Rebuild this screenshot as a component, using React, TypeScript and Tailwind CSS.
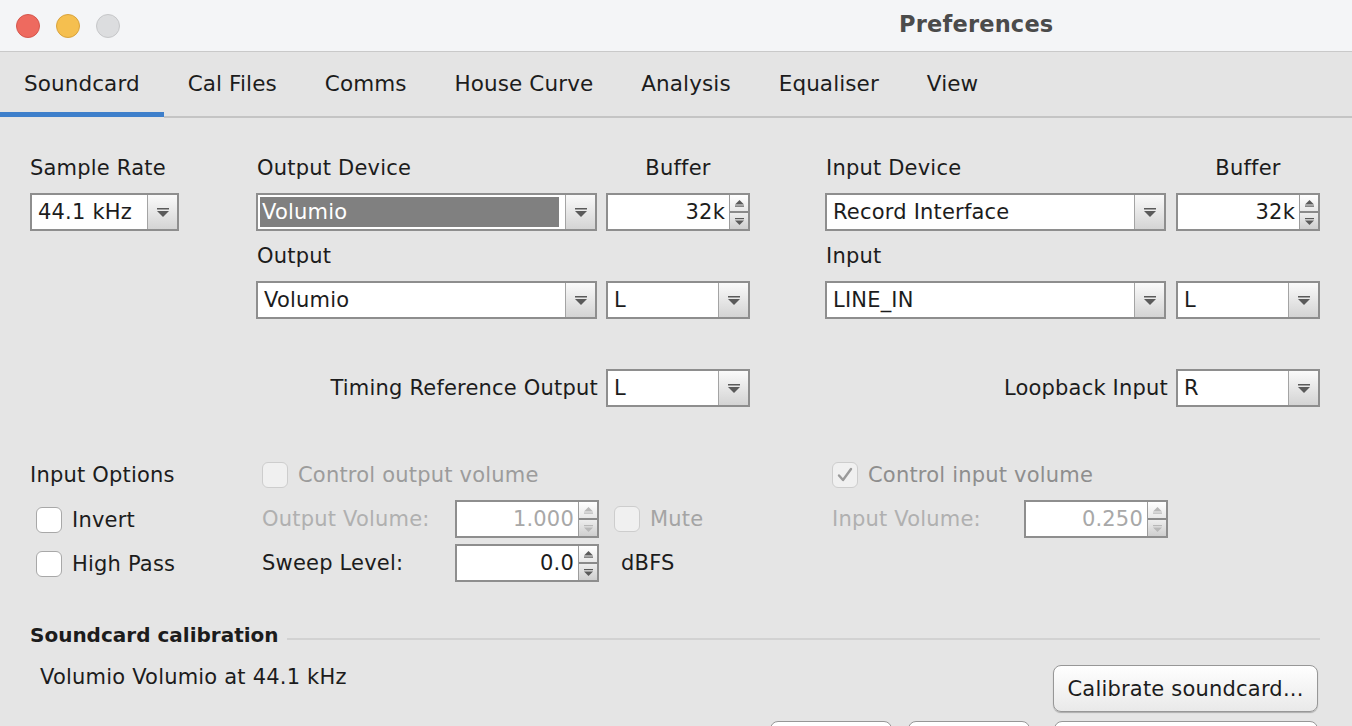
import React from 'react';

// Java Swing "Preferences" dialog, Soundcard tab

const tabs = ['Soundcard', 'Cal Files', 'Comms', 'House Curve', 'Analysis', 'Equaliser', 'View'];

function ComboArrow({ dim }: { dim?: boolean }) {
  const c = dim ? '#b0b0b0' : '#5a5a5a';
  return (
    <svg width="12" height="9" viewBox="0 0 12 9">
      <rect x="0" y="0" width="12" height="1.5" fill={c} />
      <path d="M0 3 H12 L6 9 Z" fill={c} />
    </svg>
  );
}

function SpinArrow({ up, dim }: { up?: boolean; dim?: boolean }) {
  const c = dim ? '#b8b8b8' : '#5a5a5a';
  return (
    <svg width="9" height="7" viewBox="0 0 9 7">
      {up ? (
        <>
          <path d="M4.5 0 L9 4.5 H0 Z" fill={c} />
          <rect x="0" y="5.5" width="9" height="1.2" fill={c} />
        </>
      ) : (
        <>
          <rect x="0" y="0" width="9" height="1.2" fill={c} />
          <path d="M0 2.5 H9 L4.5 7 Z" fill={c} />
        </>
      )}
    </svg>
  );
}

function Combo({ value, className, selected }: { value: string; className: string; selected?: boolean }) {
  return (
    <div className={`flex h-[38px] border-2 border-[#8e8e8e] bg-white ${className}`}>
      <div className="flex-1 flex items-stretch p-[2px] min-w-0">
        {selected ? (
          <span className="flex-1 flex items-center bg-[#808080] text-white pl-[2px] mr-[4px]">{value}</span>
        ) : (
          <span className="flex items-center pl-[4px] whitespace-nowrap">{value}</span>
        )}
      </div>
      <div className="w-[30px] shrink-0 border-l border-[#a4a4a4] bg-linear-to-b from-[#fafafa] to-[#d4d4d4] flex items-center justify-center">
        <ComboArrow />
      </div>
    </div>
  );
}

function Spinner({ value, disabled }: { value: string; disabled?: boolean }) {
  return (
    <div className="flex h-[38px] w-[144px] border-2 border-[#8e8e8e] bg-white">
      <div className={`flex-1 flex items-center justify-end pr-[4px] ${disabled ? 'text-[#a8a8a8]' : ''}`}>{value}</div>
      <div className="w-[19px] flex flex-col border-l border-[#9c9c9c]">
        <div className="flex-1 flex items-center justify-center bg-linear-to-b from-white to-[#e8e8e8] border-b-2 border-[#8a8a8a]">
          <SpinArrow up dim={disabled} />
        </div>
        <div className="flex-1 flex items-center justify-center bg-linear-to-b from-[#ededed] to-[#cfcfcf]">
          <SpinArrow dim={disabled} />
        </div>
      </div>
    </div>
  );
}

function Check({ checked, disabled }: { checked?: boolean; disabled?: boolean }) {
  return (
    <div
      className={`w-[26px] h-[26px] shrink-0 rounded-[6px] border flex items-center justify-center ${
        disabled ? 'border-[#cdcdcd] bg-[#f0f0f0]' : 'border-[#a8a8a8] bg-white'
      }`}
    >
      {checked && (
        <svg width="18" height="18" viewBox="0 0 18 18">
          <path d="M3 9.5 L7 14 L15 3" fill="none" stroke="#9a9a9a" strokeWidth="2.4" strokeLinecap="round" strokeLinejoin="round" />
        </svg>
      )}
    </div>
  );
}

export default function App() {
  return (
    <div className="w-[1352px] h-[726px] overflow-hidden bg-[#e5e5e5] text-[#1c1c1c] font-['DejaVu_Sans',sans-serif] text-[21px] tracking-[0.2px] leading-[26px] whitespace-nowrap">
      {/* Title bar */}
      <div className="h-[52px] bg-[#f4f5f7] border-b border-[#c9c9c9] flex items-center">
        <div className="flex items-center gap-[16px] pl-[16px]">
          <span className="w-[24px] h-[24px] rounded-full bg-[#ee6a5f] border border-[#d5574d]" />
          <span className="w-[24px] h-[24px] rounded-full bg-[#f5bf4f] border border-[#d9a33d]" />
          <span className="w-[24px] h-[24px] rounded-full bg-[#dcdddf] border border-[#c6c7c9]" />
        </div>
        <div className="ml-[779px] mb-[3px] text-[22.5px] font-bold text-[#4b4b4b] tracking-[0.2px]">Preferences</div>
      </div>

      {/* Tabs */}
      <div className="h-[66px] flex bg-[#e4e4e4]">
        {tabs.map((t, i) => (
          <div key={t} className="flex flex-col h-full">
            <div className="px-[24px] pt-[19px] text-[21.5px] tracking-[0.1px] leading-[26px]">{t}</div>
            {i === 0 ? (
              <div className="mt-auto mb-[1px] h-[5px] bg-[#3e7fcb]" />
            ) : (
              <div className="mt-auto h-[2px] bg-[#c4c4c4]" />
            )}
          </div>
        ))}
        <div className="flex-1 flex flex-col h-full">
          <div className="mt-auto h-[2px] bg-[#c4c4c4]" />
        </div>
      </div>

      {/* Content */}
      <div className="pl-[30px]">
        <div className="mt-[37px] grid grid-cols-[226px_350px_144px_75px_351px_144px] gap-y-[12px]">
          <div>Sample Rate</div>
          <div className="pl-[1px]">Output Device</div>
          <div className="text-center">Buffer</div>
          <div />
          <div className="pl-[1px]">Input Device</div>
          <div className="text-center">Buffer</div>

          <Combo value="44.1 kHz" className="w-[149px]" />
          <Combo value="Volumio" className="w-[341px]" selected />
          <Spinner value="32k" />
          <div />
          <Combo value="Record Interface" className="w-[341px]" />
          <Spinner value="32k" />

          <div />
          <div className="pl-[1px]">Output</div>
          <div />
          <div />
          <div className="pl-[1px]">Input</div>
          <div />

          <div />
          <Combo value="Volumio" className="w-[341px]" />
          <Combo value="L" className="w-[144px]" />
          <div />
          <Combo value="LINE_IN" className="w-[341px]" />
          <Combo value="L" className="w-[144px]" />
        </div>

        <div className="mt-[50px] grid grid-cols-[576px_144px_426px_144px] items-center">
          <div className="text-right pr-[8px]">Timing Reference Output</div>
          <Combo value="L" className="w-[144px]" />
          <div className="text-right pr-[8px]">Loopback Input</div>
          <Combo value="R" className="w-[144px]" />
        </div>

        {/* Options */}
        <div className="mt-[54px] grid grid-cols-[226px_570px_1fr]">
          <div className="flex flex-col">
            <div className="h-[28px] flex items-center">Input Options</div>
            <div className="mt-[17px] flex items-center gap-[10px] pl-[6px] h-[28px]">
              <Check />
              <span>Invert</span>
            </div>
            <div className="mt-[16px] flex items-center gap-[10px] pl-[6px] h-[28px]">
              <Check />
              <span>High Pass</span>
            </div>
          </div>

          <div className="flex flex-col pl-[6px]">
            <div className="h-[28px] flex items-center gap-[10px] text-[#9c9c9c]">
              <Check disabled />
              <span>Control output volume</span>
            </div>
            <div className="mt-[11px] flex items-center">
              <span className="w-[193px] text-[#b0b0b0]">Output Volume:</span>
              <Spinner value="1.000" disabled />
              <div className="ml-[15px] flex items-center gap-[10px] text-[#a4a4a4]">
                <Check disabled />
                <span>Mute</span>
              </div>
            </div>
            <div className="mt-[6px] flex items-center">
              <span className="w-[193px]">Sweep Level:</span>
              <Spinner value="0.0" />
              <span className="ml-[22px]">dBFS</span>
            </div>
          </div>

          <div className="flex flex-col pl-[6px]">
            <div className="h-[28px] flex items-center gap-[10px] text-[#8e8e8e]">
              <Check checked disabled />
              <span>Control input volume</span>
            </div>
            <div className="mt-[11px] flex items-center">
              <span className="w-[192px] text-[#b0b0b0]">Input Volume:</span>
              <Spinner value="0.250" disabled />
            </div>
          </div>
        </div>

        {/* Calibration */}
        <div className="mt-[40px] flex items-center w-[1290px]">
          <span className="font-bold text-[20px] tracking-normal">Soundcard calibration</span>
          <div className="flex-1 ml-[8px] mt-[8px] h-[2px] bg-[#d2d2d2]" />
        </div>
        <div className="mt-[16px] flex items-start w-[1290px]">
          <span className="pl-[10px]">Volumio Volumio at 44.1 kHz</span>
          <button className="ml-auto mt-[1px] mr-[2px] h-[47px] w-[265px] rounded-[8px] border border-[#979797] bg-linear-to-b from-white to-[#e9e9e9] shadow-[0_1px_1px_rgba(0,0,0,0.25)]">
            Calibrate soundcard...
          </button>
        </div>
        <div className="mt-[9px] flex w-[1290px] pl-[740px] gap-[16px]">
          <div className="h-[40px] w-[122px] rounded-[8px] border border-[#979797] bg-white" />
          <div className="h-[40px] w-[122px] rounded-[8px] border border-[#979797] bg-white" />
          <div className="h-[40px] w-[264px] ml-[8px] rounded-[8px] border border-[#979797] bg-white" />
        </div>
      </div>
    </div>
  );
}
